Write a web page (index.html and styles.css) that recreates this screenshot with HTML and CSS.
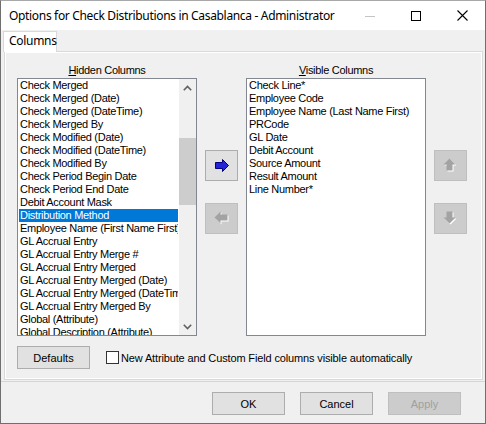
FILE: index.html
```html
<!DOCTYPE html>
<html>
<head>
<meta charset="utf-8">
<link rel="stylesheet" href="styles.css">
</head>
<body>
<div class="window">
  <div class="titlebar">
    <span class="title">Options for Check Distributions in Casablanca - Administrator</span>
    <div class="controls">
      <span class="ctl"><svg width="10" height="10" viewBox="0 0 10 10"><line x1="0" y1="5.5" x2="10" y2="5.5" stroke="#c4c4c4" stroke-width="1"/></svg></span>
      <span class="ctl"><svg width="10" height="10" viewBox="0 0 10 10"><rect x="0.5" y="0.5" width="9" height="9" fill="none" stroke="#000" stroke-width="1"/></svg></span>
      <span class="ctl"><svg width="11" height="11" viewBox="0 0 11 11"><path d="M0.5 0.5 L10.5 10.5 M10.5 0.5 L0.5 10.5" stroke="#000" stroke-width="1.1" fill="none"/></svg></span>
    </div>
  </div>
  <div class="client">
    <div class="tabs"><div class="tab">Columns</div></div>
    <div class="panel">
      <div class="lists">
        <div class="col">
          <div class="label"><u>H</u>idden Columns</div>
          <div class="listbox">
            <ul class="items">
              <li>Check Merged</li>
              <li>Check Merged (Date)</li>
              <li>Check Merged (DateTime)</li>
              <li>Check Merged By</li>
              <li>Check Modified (Date)</li>
              <li>Check Modified (DateTime)</li>
              <li>Check Modified By</li>
              <li>Check Period Begin Date</li>
              <li>Check Period End Date</li>
              <li>Debit Account Mask</li>
              <li class="sel">Distribution Method</li>
              <li>Employee Name (First Name First)</li>
              <li>GL Accrual Entry</li>
              <li>GL Accrual Entry Merge #</li>
              <li>GL Accrual Entry Merged</li>
              <li>GL Accrual Entry Merged (Date)</li>
              <li>GL Accrual Entry Merged (DateTime)</li>
              <li>GL Accrual Entry Merged By</li>
              <li>Global (Attribute)</li>
              <li>Global Description (Attribute)</li>
            </ul>
            <div class="scrollbar">
              <div class="sb-btn"><svg width="9" height="6" viewBox="0 0 9 6"><path d="M0.8 5.2 L4.5 1.5 L8.2 5.2" stroke="#606060" stroke-width="1.6" fill="none"/></svg></div>
              <div class="sb-track"><div class="sb-thumb"></div></div>
              <div class="sb-btn"><svg width="9" height="6" viewBox="0 0 9 6"><path d="M0.8 0.8 L4.5 4.5 L8.2 0.8" stroke="#606060" stroke-width="1.6" fill="none"/></svg></div>
            </div>
          </div>
        </div>
        <div class="btncol">
          <div class="ibtn">
            <svg width="14" height="13" viewBox="0 0 14 13"><path d="M0.5 3.5 H7.5 V0.5 L13.5 6.5 L7.5 12.5 V9.5 H0.5 Z" fill="#2323d8" stroke="#000080" stroke-width="1"/></svg>
          </div>
          <div class="ibtn off">
            <svg width="15" height="15" viewBox="0 0 15 15"><path d="M1.5 7.5 L7.5 1.5 V4.5 H14.5 V10.5 H7.5 V13.5 Z" fill="#fff"/><path d="M0.5 6.5 L6.5 0.5 V3.5 H13.5 V9.5 H6.5 V12.5 Z" fill="#a3a3a3"/></svg>
          </div>
        </div>
        <div class="col">
          <div class="label"><u>V</u>isible Columns</div>
          <div class="listbox">
            <ul class="items">
              <li>Check Line*</li>
              <li>Employee Code</li>
              <li>Employee Name (Last Name First)</li>
              <li>PRCode</li>
              <li>GL Date</li>
              <li>Debit Account</li>
              <li>Source Amount</li>
              <li>Result Amount</li>
              <li>Line Number*</li>
            </ul>
          </div>
        </div>
        <div class="btncol">
          <div class="ibtn off">
            <svg width="15" height="15" viewBox="0 0 15 15"><path d="M7.5 1.5 L13.5 7.5 H10.5 V13.5 H4.5 V7.5 H1.5 Z" fill="#fff"/><path d="M6.5 0.5 L12.5 6.5 H9.5 V12.5 H3.5 V6.5 H0.5 Z" fill="#a3a3a3"/></svg>
          </div>
          <div class="ibtn off">
            <svg width="15" height="15" viewBox="0 0 15 15"><path d="M7.5 13.5 L13.5 7.5 H10.5 V1.5 H4.5 V7.5 H1.5 Z" fill="#fff"/><path d="M6.5 12.5 L12.5 6.5 H9.5 V0.5 H3.5 V6.5 H0.5 Z" fill="#a3a3a3"/></svg>
          </div>
        </div>
      </div>
      <div class="options">
        <div class="btn">Defaults</div>
        <label class="check"><span class="box"></span><span class="check-text">New Attribute and Custom Field columns visible automatically</span></label>
      </div>
    </div>
    <div class="footer">
      <div class="btn">OK</div>
      <div class="btn">Cancel</div>
      <div class="btn off">Apply</div>
    </div>
  </div>
</div>
</body>
</html>
```
FILE: styles.css
```css
* { box-sizing: border-box; }
html, body { margin: 0; padding: 0; background: #f0f0f0; }
body { font-family: "Liberation Sans", Arial, sans-serif; font-size: 11px; color: #000; }

.window {
  width: 486px;
  height: 424px;
  border: 1px solid #6f6f6f;
  border-top-color: #a8a8a8;
  background: #f0f0f0;
  display: flex;
  flex-direction: column;
}

.titlebar {
  height: 29px;
  background: #fff;
  display: flex;
  align-items: center;
  flex: none;
}
.title {
  font-family: "Noto Sans", "Open Sans", sans-serif;
  font-size: 12px;
  letter-spacing: -0.33px;
  padding-left: 8px;
  flex: 1;
  white-space: nowrap;
  padding-bottom: 1px;
}
.controls { display: flex; height: 29px; }
.ctl {
  width: 46px;
  display: flex;
  align-items: center;
  justify-content: center;
}

.client { flex: 1; display: flex; flex-direction: column; }

.tabs { height: 21px; padding: 1px 0 0 2px; display: flex; flex: none; }
.tab {
  width: 54px;
  height: 21px;
  background: #fff;
  border: 1px solid #d9d9d9;
  border-bottom: none;
  font-family: "Noto Sans", "Open Sans", sans-serif;
  font-size: 12px;
  letter-spacing: -0.3px;
  padding-left: 5px;
  line-height: 18px;
  position: relative;
  z-index: 1;
}

.panel {
  margin: 0 2px 0 3px;
  height: 329px;
  border: 1px solid #d9d9d9;
  box-shadow: inset 1px 1px 0 #fff, inset -1px -1px 0 #fff;
  padding: 11px 0 0 12px;
  flex: none;
}

.lists { display: flex; align-items: flex-start; }
.col { width: 180px; display: flex; flex-direction: column; }
.label { height: 15px; line-height: 15px; text-align: center; letter-spacing: -0.3px; }
.label u { text-decoration-thickness: 1px; text-underline-offset: 1px; }

.listbox {
  height: 258px;
  border: 1px solid #828790;
  background: #fff;
  display: flex;
  overflow: hidden;
}
.items {
  list-style: none;
  margin: 0;
  padding: 0 1px;
  flex: 1;
  min-width: 0;
  overflow: hidden;
}
.items li {
  height: 13px;
  line-height: 13px;
  padding-left: 1px;
  white-space: nowrap;
  overflow: hidden;
  letter-spacing: -0.3px;
}
.items li.sel { background: #0078d7; color: #fff; }

.scrollbar { width: 17px; background: #f0f0f0; display: flex; flex-direction: column; flex: none; }
.sb-btn { height: 17px; display: flex; align-items: center; justify-content: center; }
.sb-track { flex: 1; padding-top: 42px; }
.sb-thumb { height: 67px; background: #cdcdcd; }

.btncol { width: 33px; margin: 87px 8px 0; display: flex; flex-direction: column; gap: 22px; }
.ibtn {
  height: 31px;
  background: #e1e1e1;
  border: 1px solid #adadad;
  display: flex;
  align-items: center;
  justify-content: center;
}
.ibtn.off { background: #cccccc; border-color: #bfbfbf; }

.options { display: flex; align-items: center; margin-top: 10px; }
.btn {
  width: 73px;
  height: 23px;
  background: #e1e1e1;
  border: 1px solid #adadad;
  display: flex;
  align-items: center;
  justify-content: center;
}
.btn.off { background: #cccccc; border-color: #bfbfbf; color: #a0a0a0; }
.check { display: flex; align-items: center; margin-left: 16px; gap: 2px; }
.check-text { letter-spacing: -0.14px; }
.box { width: 13px; height: 13px; border: 1px solid #333; background: #fff; }

.footer {
  flex: 1;
  margin-top: 1px;
  border-top: 1px solid #d5d5d5;
  display: flex;
  justify-content: flex-end;
  gap: 15px;
  padding: 10px 24px 0 0;
}
```
